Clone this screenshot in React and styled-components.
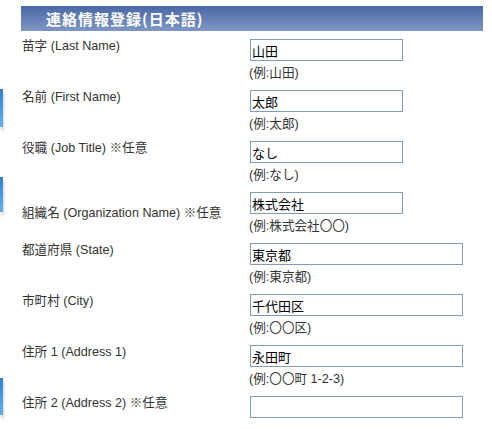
import React from 'react';
import styled, { createGlobalStyle } from 'styled-components';

const GlobalStyle = createGlobalStyle`
  html, body {
    margin: 0;
    padding: 0;
    background: #fff;
  }
  body {
    font-family: "Liberation Sans", "Noto Sans CJK JP", sans-serif;
    color: #333;
  }
`;

const Page = styled.div`
  display: flex;
  width: 492px;
  height: 429px;
  overflow: hidden;
`;

const Gutter = styled.div`
  display: flex;
  flex-direction: column;
  width: 21px;
  flex-shrink: 0;
`;

const Tab = styled.div`
  width: 3px;
  height: ${props => props.h}px;
  margin-top: ${props => props.top}px;
  background: linear-gradient(135deg, #2f7fcc 0%, #4a9ae0 50%, #6aaee4 100%);
  box-shadow: 1px 3px 3px rgba(0, 0, 0, 0.18);
`;

const Main = styled.div`
  width: 462px;
  padding-top: 6px;
`;

const Header = styled.div`
  height: 25px;
  display: flex;
  align-items: center;
  padding-left: 25px;
  background: linear-gradient(#4a68a6, #7e97c2);
  color: #fff;
  font-family: "Noto Sans CJK JP", sans-serif;
  font-weight: bold;
  font-size: 15px;
  letter-spacing: 1px;
  margin-bottom: 3px;
`;

const Row = styled.div`
  display: grid;
  grid-template-columns: 228px 1fr;
  height: 51px;
  box-sizing: border-box;
  padding-top: 5px;
`;

const Label = styled.div`
  padding-left: 1px;
  font-size: 12.6px;
  line-height: 14px;
  color: #333;
  align-self: ${props => (props.center ? 'center' : 'start')};
  margin-top: ${props => (props.center ? '-5px' : '0')};
`;

const Field = styled.div`
  display: flex;
  flex-direction: column;
  align-items: flex-start;
`;

const TextInput = styled.input`
  box-sizing: border-box;
  width: ${props => (props.wide ? 213 : 153)}px;
  height: 22px;
  margin: 0 0 0 1px;
  padding: 0 1px;
  border: 1px solid #7f9db9;
  border-radius: 0;
  background: #fff;
  color: #000;
  font-family: "Liberation Sans", "Noto Sans CJK JP", sans-serif;
  font-size: 13px;
  outline: none;
`;

const Hint = styled.div`
  margin-top: 5px;
  font-size: 12.6px;
  line-height: 14px;
  color: #333;
`;

const rows = [
  { label: '苗字 (Last Name)', value: '山田', hint: '(例:山田)' },
  { label: '名前 (First Name)', value: '太郎', hint: '(例:太郎)' },
  { label: '役職 (Job Title) ※任意', value: 'なし', hint: '(例:なし)' },
  { label: '組織名 (Organization Name) ※任意', value: '株式会社', hint: '(例:株式会社〇〇)', center: true },
  { label: '都道府県 (State)', value: '東京都', hint: '(例:東京都)', wide: true },
  { label: '市町村 (City)', value: '千代田区', hint: '(例:〇〇区)', wide: true },
  { label: '住所 1 (Address 1)', value: '永田町', hint: '(例:〇〇町 1-2-3)', wide: true },
  { label: '住所 2 (Address 2) ※任意', value: '', hint: '', wide: true },
];

const App = () => {
  return (
    <>
      <GlobalStyle />
      <Page>
        <Gutter>
          <Tab top={89} h={38} />
          <Tab top={50} h={35} />
          <Tab top={166} h={37} />
        </Gutter>
        <Main>
          <Header>連絡情報登録(日本語)</Header>
          {rows.map(r => (
            <Row key={r.label}>
              <Label center={r.center}>{r.label}</Label>
              <Field>
                <TextInput wide={r.wide} defaultValue={r.value} />
                {r.hint && <Hint>{r.hint}</Hint>}
              </Field>
            </Row>
          ))}
        </Main>
      </Page>
    </>
  );
};

export default App;
